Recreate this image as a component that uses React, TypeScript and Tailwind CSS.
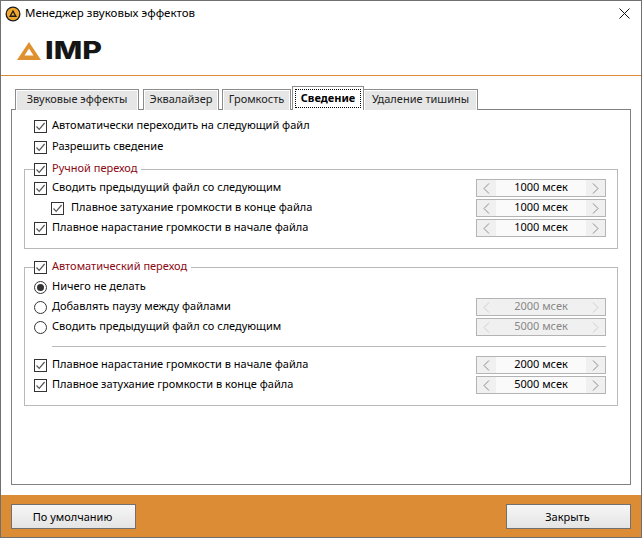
import { ReactNode } from 'react';

function CheckBox({ checked = true }: { checked?: boolean }) {
  return (
    <span className="flex h-[13px] w-[13px] shrink-0 items-center justify-center border border-[#333333] bg-white">
      {checked ? (
        <svg width="11" height="11" viewBox="0 0 11 11" fill="none">
          <path d="M1.5 5.5 L4.2 8.4 L9.6 2" stroke="#555555" strokeWidth="1.2" />
        </svg>
      ) : null}
    </span>
  );
}

function Radio({ checked = false }: { checked?: boolean }) {
  return (
    <span className="flex h-[13px] w-[13px] shrink-0 items-center justify-center rounded-full border border-[#333333] bg-white">
      {checked ? <span className="h-[7px] w-[7px] rounded-full bg-[#333333]" /> : null}
    </span>
  );
}

function Spin({ value, disabled = false }: { value: string; disabled?: boolean }) {
  const chevron = disabled ? '#cfcfcf' : '#8c8c8c';
  return (
    <div className="flex h-[18px] w-[130px] shrink-0 border border-[#b4b4b4] bg-[#f0f0f0]">
      <span className="flex w-[19px] items-center justify-center">
        <svg width="7" height="11" viewBox="0 0 7 11" fill="none">
          <path d="M6 0.5 L1 5.5 L6 10.5" stroke={chevron} />
        </svg>
      </span>
      <span className={disabled ? 'flex-1 text-center leading-[14px] text-[#888888]' : 'flex-1 bg-[#fafafa] text-center leading-[14px] text-black'}>
        {value}
      </span>
      <span className="flex w-[19px] items-center justify-center">
        <svg width="7" height="11" viewBox="0 0 7 11" fill="none">
          <path d="M1 0.5 L6 5.5 L1 10.5" stroke={chevron} />
        </svg>
      </span>
    </div>
  );
}

function Row({ control, label, spin, indent = false }: { control: ReactNode; label: string; spin?: ReactNode; indent?: boolean }) {
  return (
    <div className={indent ? 'flex h-[20px] items-center pl-[17px] pr-[11px]' : 'flex h-[20px] items-center pr-[11px]'}>
      {control}
      <span className={indent ? 'ml-[7px] flex-1 pb-[2px]' : 'ml-[5px] flex-1 pb-[2px]'}>{label}</span>
      {spin}
    </div>
  );
}

function Group({ title, children, className }: { title: string; children: ReactNode; className: string }) {
  return (
    <fieldset className={`border border-[#b9b9b9] pl-[9px] ${className}`}>
      <legend className="mb-px flex h-[16px] items-center pr-[4px]">
        <CheckBox />
        <span className="ml-[5px] pb-[2px] text-[#8b0a14]">{title}</span>
      </legend>
      {children}
    </fieldset>
  );
}

const tabs = [
  { label: 'Звуковые эффекты', width: 'w-[124px]', gap: 'mr-[4px]' },
  { label: 'Эквалайзер', width: 'w-[76px]', gap: 'mr-[3px]' },
  { label: 'Громкость', width: 'w-[69px]', gap: 'mr-[3px]' },
];

const tabShadow = 'shadow-[inset_1px_1px_0_#ffffff,inset_-1px_0_0_#ffffff]';

export default function App() {
  return (
    <div className="flex h-[538px] w-[642px] flex-col border border-[#707070] bg-white font-['Noto_Sans',sans-serif] text-[11px] text-black">
      <div className="flex h-[25px] shrink-0 items-center pl-[4px] pr-[11px]">
        <svg width="16" height="16" viewBox="0 0 16 16">
          <circle cx="8" cy="8" r="7.5" fill="#1c1c1c" />
          <circle cx="8" cy="8" r="6.2" fill="#f0a52c" />
          <path d="M8 3.8 L12 11 H4 Z M8 6.6 L6.2 9.6 H9.8 Z" fill="#1c1c1c" fillRule="evenodd" />
        </svg>
        <span className="ml-[4px] flex-1 pb-[2px] text-[11.5px]">Менеджер звуковых эффектов</span>
        <svg width="11" height="11" viewBox="0 0 11 11" fill="none">
          <path d="M0.5 0.5 L10.5 10.5 M10.5 0.5 L0.5 10.5" stroke="#111111" />
        </svg>
      </div>

      <div className="flex h-[50px] shrink-0 items-start border-b border-[#d98b35] pl-[16px] pt-[16px]">
        <svg width="24" height="18" viewBox="0 0 24 18">
          <path d="M12 0 L24 18 H0 Z M12 6.5 L7.5 13.5 H16.5 Z" fill="#e0912f" fillRule="evenodd" />
        </svg>
        <span className="ml-[4px] origin-left scale-x-[1.26] font-['Inter',sans-serif] text-[24px] font-extrabold leading-[18px] text-[#151515]">IMP</span>
      </div>

      <div className="flex min-h-0 flex-1 flex-col px-[10px] pt-[9px]">
        <div className="relative z-10 -mb-px flex h-[25px] items-end pl-[4px]">
          {tabs.map((tab) => (
            <div key={tab.label} className={`${tab.width} ${tab.gap} ${tabShadow} flex h-[21px] items-center justify-center border border-b-0 border-[#8c8c8c] bg-[#e6e6e6] pb-[2px] text-[#222222]`}>
              {tab.label}
            </div>
          ))}
          <div className="-ml-[2px] flex h-[24px] w-[72px] items-center justify-center border border-b-0 border-[#8c8c8c] bg-white p-[2px]">
            <span className="flex h-full w-full items-center justify-center border border-dotted border-black pb-px font-bold">Сведение</span>
          </div>
          <div className={`${tabShadow} flex h-[21px] w-[114px] items-center justify-center border border-b-0 border-l-0 border-[#8c8c8c] bg-[#e6e6e6] pb-[2px] text-[#222222]`}>
            Удаление тишины
          </div>
        </div>

        <div className="flex h-[376px] flex-col border border-[#808080] px-[12px] pt-[6px]">
          <div className="flex flex-col gap-px pl-[10px]">
            <Row control={<CheckBox />} label="Автоматически переходить на следующий файл" />
            <Row control={<CheckBox />} label="Разрешить сведение" />
          </div>

          <Group title="Ручной переход" className="mt-[4px] h-[88px]">
            <Row control={<CheckBox />} label="Сводить предыдущий файл со следующим" spin={<Spin value="1000 мсек" />} />
            <Row indent control={<CheckBox />} label="Плавное затухание громкости в конце файла" spin={<Spin value="1000 мсек" />} />
            <Row control={<CheckBox />} label="Плавное нарастание громкости в начале файла" spin={<Spin value="1000 мсек" />} />
          </Group>

          <Group title="Автоматический переход" className="mt-[10px] h-[147px] pt-px">
            <Row control={<Radio checked />} label="Ничего не делать" />
            <Row control={<Radio />} label="Добавлять паузу между файлами" spin={<Spin disabled value="2000 мсек" />} />
            <Row control={<Radio />} label="Сводить предыдущий файл со следующим" spin={<Spin disabled value="5000 мсек" />} />
            <div className="mb-[8px] ml-[18px] mr-[11px] mt-[9px] border-t border-[#b9b9b9]" />
            <Row control={<CheckBox />} label="Плавное нарастание громкости в начале файла" spin={<Spin value="2000 мсек" />} />
            <Row control={<CheckBox />} label="Плавное затухание громкости в конце файла" spin={<Spin value="5000 мсек" />} />
          </Group>
        </div>
      </div>

      <div className="flex h-[42px] shrink-0 items-start justify-between bg-[#dc8c35] px-[10px] pt-[9px]">
        <button className="h-[25px] w-[125px] border border-[#707070] bg-gradient-to-b from-[#f6f6f6] to-[#e4e4e4] pr-[2px] pt-px">По умолчанию</button>
        <button className="h-[25px] w-[125px] border border-[#707070] bg-gradient-to-b from-[#f6f6f6] to-[#e4e4e4] pr-[2px] pt-px">Закрыть</button>
      </div>
    </div>
  );
}
